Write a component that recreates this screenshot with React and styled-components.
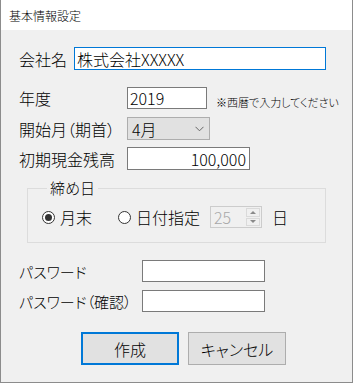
import styled, { createGlobalStyle } from "styled-components";

const GlobalStyle = createGlobalStyle`
  html, body { margin: 0; padding: 0; background: #f0f0f0; }
  body {
    font-family: "Noto Sans CJK JP", "Noto Sans", sans-serif;
    font-feature-settings: "palt";
    font-weight: 300;
    color: #000;
  }
`;

const Window = styled.div`
  width: 353px;
  height: 383px;
  box-sizing: border-box;
  border: 1px solid #8c8c8c;
  border-top: none;
  display: flex;
  flex-direction: column;
  background: #f0f0f0;
`;

const TitleBar = styled.div`
  height: 30px;
  flex: none;
  background: #fff;
  display: flex;
  align-items: center;
  padding-left: 8px;
  font-size: 12px;
`;

const Content = styled.div`
  flex: 1;
  padding: 17px 0 0 18px;
`;

const Row = styled.div`
  display: flex;
  align-items: center;
  height: ${(p) => p.$h || 23}px;
  margin-top: ${(p) => p.$mt || 0}px;
`;

const Label = styled.div`
  flex: none;
  width: ${(p) => p.$w}px;
  font-size: ${(p) => p.$size || 16}px;
  line-height: 1;
  white-space: nowrap;
`;

const TextInput = styled.input`
  box-sizing: border-box;
  width: ${(p) => p.$w}px;
  height: 100%;
  margin: 0;
  border: 1px solid ${(p) => (p.$focus ? "#0078d7" : "#7a7a7a")};
  background: #fff;
  padding: 0 ${(p) => (p.$align === "right" ? 3 : 2)}px 0 2px;
  font: inherit;
  font-size: 16px;
  text-align: ${(p) => p.$align || "left"};
  outline: none;
`;

const Note = styled.div`
  align-self: flex-end;
  margin: 0 0 1px 9px;
  font-size: 11px;
  line-height: 1;
  white-space: nowrap;
`;

const Select = styled.div`
  box-sizing: border-box;
  width: 83px;
  height: 100%;
  border: 1px solid #adadad;
  background: #e1e1e1;
  display: flex;
  align-items: center;
  justify-content: space-between;
  padding: 0 5px 0 4px;
  font-size: 16px;
  line-height: 1;
`;

const Group = styled.fieldset`
  box-sizing: border-box;
  width: 299px;
  margin: 9px 0 0 8px;
  border: 1px solid #dcdcdc;
  padding: 9px 0 14px 14px;
`;

const Legend = styled.legend`
  font-size: 15px;
  line-height: 18px;
  padding: 0 3px;
  margin-left: 5px;
`;

const RadioItem = styled.label`
  display: flex;
  align-items: center;
  gap: 5px;
  font-size: 16px;
  line-height: 1;
  margin-right: ${(p) => p.$mr || 0}px;
`;

const RadioDot = styled.span`
  box-sizing: border-box;
  width: 13px;
  height: 13px;
  border: 1px solid #333;
  border-radius: 50%;
  background: #fff;
  display: flex;
  align-items: center;
  justify-content: center;
  &::after {
    content: "";
    width: 7px;
    height: 7px;
    border-radius: 50%;
    background: ${(p) => (p.$checked ? "#333" : "transparent")};
  }
`;

const Spinner = styled.div`
  box-sizing: border-box;
  width: 52px;
  height: 22px;
  margin: 0 10px 0 10px;
  border: 1px solid #cccccc;
  background: #f0f0f0;
  display: flex;
  align-items: center;
  justify-content: space-between;
  padding: 1px 1px 1px 3px;
  font-size: 16px;
  color: #a8a8a8;
`;

const SpinButtons = styled.div`
  display: flex;
  flex-direction: column;
  gap: 1px;
  width: 14px;
  height: 100%;
`;

const SpinButton = styled.div`
  flex: 1;
  box-sizing: border-box;
  border: 1px solid #dadada;
  background: #f0f0f0;
  display: flex;
  align-items: center;
  justify-content: center;
  &::after {
    content: "";
    border-left: 3px solid transparent;
    border-right: 3px solid transparent;
    ${(p) =>
      p.$dir === "up"
        ? "border-bottom: 3px solid #8a8a8a;"
        : "border-top: 3px solid #8a8a8a;"}
  }
`;

const Unit = styled.span`
  font-size: 16px;
  line-height: 1;
`;

const Buttons = styled.div`
  display: flex;
  gap: 9px;
  margin: 20px 0 0 62px;
`;

const Button = styled.button`
  box-sizing: border-box;
  width: 98px;
  height: 33px;
  margin: 0;
  padding: 0;
  background: #e1e1e1;
  border: ${(p) => (p.$primary ? "2px solid #0078d7" : "1px solid #adadad")};
  font: inherit;
  font-size: 16px;
  color: #000;
`;

const Chevron = () => (
  <svg width="9" height="6" viewBox="0 0 9 6">
    <path d="M0.5 0.8 L4.5 4.8 L8.5 0.8" fill="none" stroke="#666" strokeWidth="1" />
  </svg>
);

export default function App() {
  return (
    <>
      <GlobalStyle />
      <Window>
        <TitleBar>基本情報設定</TitleBar>
        <Content>
          <Row>
            <Label $w={55}>会社名</Label>
            <TextInput $w={252} $focus readOnly value="株式会社XXXXX" />
          </Row>
          <Row $mt={17} $h={22}>
            <Label $w={108}>年度</Label>
            <TextInput $w={80} readOnly value="2019" />
            <Note>※西暦で入力してください</Note>
          </Row>
          <Row $mt={8}>
            <Label $w={108}>開始月（期首）</Label>
            <Select>
              <span>4月</span>
              <Chevron />
            </Select>
          </Row>
          <Row $mt={7}>
            <Label $w={108}>初期現金残高</Label>
            <TextInput $w={123} $align="right" readOnly value="100,000" />
          </Row>
          <Group>
            <Legend>締め日</Legend>
            <Row $h={22}>
              <RadioItem $mr={26}>
                <RadioDot $checked />
                月末
              </RadioItem>
              <RadioItem>
                <RadioDot />
                日付指定
              </RadioItem>
              <Spinner>
                <span>25</span>
                <SpinButtons>
                  <SpinButton $dir="up" />
                  <SpinButton $dir="down" />
                </SpinButtons>
              </Spinner>
              <Unit>日</Unit>
            </Row>
          </Group>
          <Row $mt={17} $h={22}>
            <Label $w={123} $size={15}>パスワード</Label>
            <TextInput $w={123} readOnly value="" />
          </Row>
          <Row $mt={8} $h={22}>
            <Label $w={123} $size={15}>パスワード（確認）</Label>
            <TextInput $w={123} readOnly value="" />
          </Row>
          <Buttons>
            <Button $primary>作成</Button>
            <Button>キャンセル</Button>
          </Buttons>
        </Content>
      </Window>
    </>
  );
}
